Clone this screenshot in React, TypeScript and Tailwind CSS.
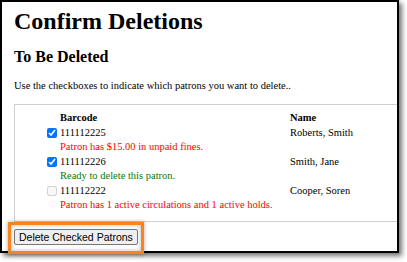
export default function App() {
  const rows = [
    { barcode: "111112225", name: "Roberts, Smith", msg: "Patron has $15.00 in unpaid fines.", ok: false, checked: true, disabled: false },
    { barcode: "111112226", name: "Smith, Jane", msg: "Ready to delete this patron.", ok: true, checked: true, disabled: false },
    { barcode: "111112222", name: "Cooper, Soren", msg: "Patron has 1 active circulations and 1 active holds.", ok: false, checked: false, disabled: true },
  ];

  return (
    <div className="relative h-[262px] w-[407px] bg-white">
      <div className="h-[253px] w-[399px] overflow-hidden border-2 border-black bg-white pl-[12px] pt-[5px] text-black shadow-[3px_3px_5px_rgba(0,0,0,0.55)]">
        <h1 className="font-[Times_New_Roman,serif] text-[24px] font-bold leading-[28px]">Confirm Deletions</h1>
        <h3 className="mt-[12px] font-[Times_New_Roman,serif] text-[16px] font-bold leading-[20px]">To Be Deleted</h3>
        <p className="mt-[12px] font-[Times_New_Roman,serif] text-[10.5px] leading-[14px]">Use the checkboxes to indicate which patrons you want to delete..</p>

        <div className="mt-[11px] w-[420px] border border-[#cfcfcf] pb-[8px] pt-[6px] font-[Times_New_Roman,serif] text-[10.5px] leading-[14.5px]">
          <div className="flex font-bold">
            <div className="w-[275px] pl-[45px]">Barcode</div>
            <div>Name</div>
          </div>
          {rows.map((r) => (
            <div key={r.barcode}>
              <div className="flex">
                <div className="flex w-[275px] items-center pl-[32px]">
                  <input
                    type="checkbox"
                    defaultChecked={r.checked}
                    disabled={r.disabled}
                    className="mr-[3px] h-[10px] w-[10px] accent-[#0075ff]"
                  />
                  <span>{r.barcode}</span>
                </div>
                <div>{r.name}</div>
              </div>
              <div className={`pl-[45px] ${r.ok ? "text-[#008000]" : "text-[#ff0000]"}`}>{r.msg}</div>
            </div>
          ))}
        </div>

        <button className="mt-[7px] h-[16px] rounded-[2px] border border-[#767676] bg-[#efefef] px-[4px] font-[Liberation_Sans,Arial,sans-serif] text-[10.5px] leading-[14px] text-black">
          Delete Checked Patrons
        </button>
      </div>

      <div className="pointer-events-none absolute left-[8px] top-[222px] h-[32px] w-[136px] border-[3px] border-[#f7841c] shadow-[0_0_4px_rgba(0,0,0,0.35),inset_0_0_4px_rgba(0,0,0,0.3)]" />
    </div>
  );
}
